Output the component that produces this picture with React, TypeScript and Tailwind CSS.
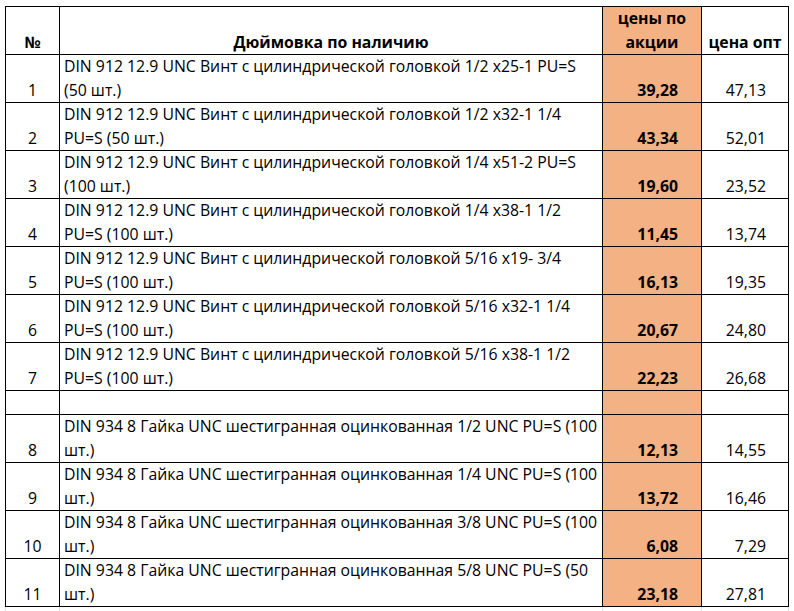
const rows: { n: string; l1: string; l2: string; promo: string; opt: string }[] = [
  { n: "1", l1: "DIN 912 12.9 UNC Винт с цилиндрической головкой 1/2 x25-1 PU=S", l2: "(50 шт.)", promo: "39,28", opt: "47,13" },
  { n: "2", l1: "DIN 912 12.9 UNC Винт с цилиндрической головкой 1/2 x32-1 1/4", l2: "PU=S (50 шт.)", promo: "43,34", opt: "52,01" },
  { n: "3", l1: "DIN 912 12.9 UNC Винт с цилиндрической головкой 1/4 x51-2 PU=S", l2: "(100 шт.)", promo: "19,60", opt: "23,52" },
  { n: "4", l1: "DIN 912 12.9 UNC Винт с цилиндрической головкой 1/4 x38-1 1/2", l2: "PU=S (100 шт.)", promo: "11,45", opt: "13,74" },
  { n: "5", l1: "DIN 912 12.9 UNC Винт с цилиндрической головкой 5/16 x19- 3/4", l2: "PU=S (100 шт.)", promo: "16,13", opt: "19,35" },
  { n: "6", l1: "DIN 912 12.9 UNC Винт с цилиндрической головкой 5/16 x32-1 1/4", l2: "PU=S (100 шт.)", promo: "20,67", opt: "24,80" },
  { n: "7", l1: "DIN 912 12.9 UNC Винт с цилиндрической головкой 5/16 x38-1 1/2", l2: "PU=S (100 шт.)", promo: "22,23", opt: "26,68" },
  { n: "", l1: "", l2: "", promo: "", opt: "" },
  { n: "8", l1: "DIN 934 8 Гайка UNC шестигранная оцинкованная 1/2 UNC PU=S (100", l2: "шт.)", promo: "12,13", opt: "14,55" },
  { n: "9", l1: "DIN 934 8 Гайка UNC шестигранная оцинкованная 1/4 UNC PU=S (100", l2: "шт.)", promo: "13,72", opt: "16,46" },
  { n: "10", l1: "DIN 934 8 Гайка UNC шестигранная оцинкованная 3/8 UNC PU=S (100", l2: "шт.)", promo: "6,08", opt: "7,29" },
  { n: "11", l1: "DIN 934 8 Гайка UNC шестигранная оцинкованная 5/8 UNC PU=S (50", l2: "шт.)", promo: "23,18", opt: "27,81" },
];

const cell = "border-r border-b border-black flex flex-col justify-end leading-[24px]";

export default function App() {
  return (
    <div className="min-h-screen bg-white pl-[5px] pt-[6px] text-black text-[15.8px] font-['Open_Sans',sans-serif]">
      <div className="grid grid-cols-[54px_543px_99px_87px] w-[784px] border-l border-t border-black">
        <div className={`${cell} h-[48px] items-center font-bold`}>№</div>
        <div className={`${cell} h-[48px] items-center font-bold`}>Дюймовка по наличию</div>
        <div className={`${cell} h-[48px] items-center font-bold bg-[#f4b183] text-center`}>
          <span>цены по</span>
          <span>акции</span>
        </div>
        <div className={`${cell} h-[48px] items-center font-bold`}>цена опт</div>

        {rows.map((r, i) => {
          const h = r.n ? "h-[48px]" : "h-[24px]";
          return [
            <div key={`n${i}`} className={`${cell} ${h} items-center`}>{r.n}</div>,
            <div key={`d${i}`} className={`${cell} ${h} pl-[4px] whitespace-nowrap`}>
              {r.l1 && <span>{r.l1}</span>}
              {r.l2 && <span>{r.l2}</span>}
            </div>,
            <div key={`p${i}`} className={`${cell} ${h} items-end pr-[23px] font-bold bg-[#f4b183]`}>{r.promo}</div>,
            <div key={`o${i}`} className={`${cell} ${h} items-end pr-[22px]`}>{r.opt}</div>,
          ];
        })}
      </div>
      <div className="grid grid-cols-[54px_543px_99px_87px] w-[784px] h-[5px] border-l border-[#e2e2e2]">
        <div className="border-r border-[#e2e2e2]" />
        <div className="border-r border-[#e2e2e2]" />
        <div className="border-r border-[#e2e2e2]" />
        <div className="border-r border-[#e2e2e2]" />
      </div>
    </div>
  );
}
